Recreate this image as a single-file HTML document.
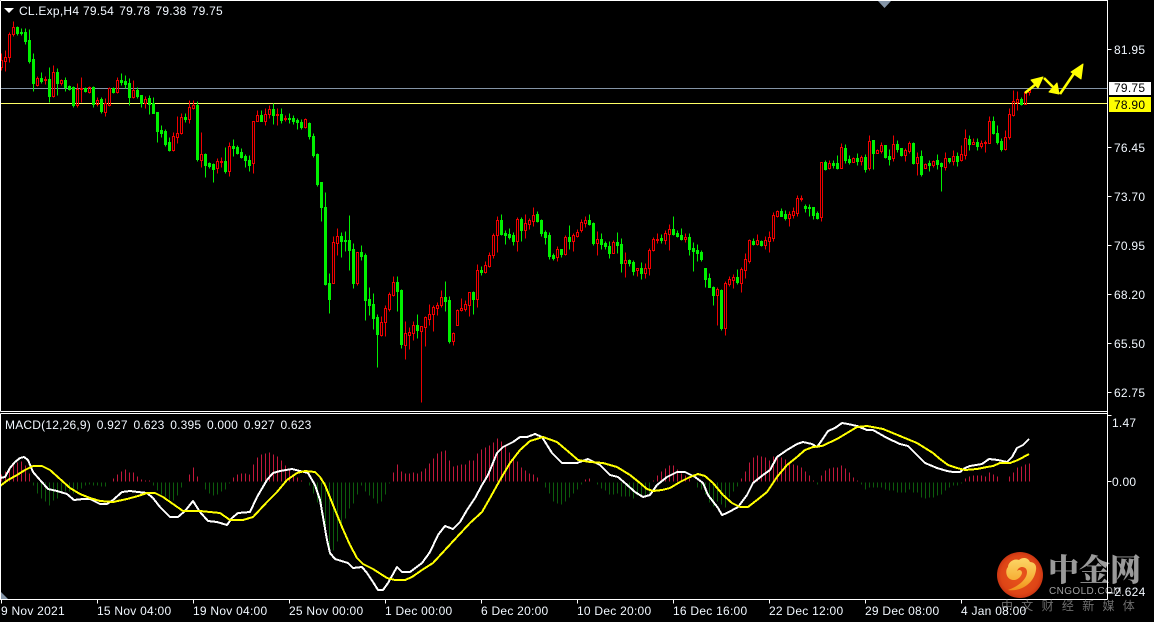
<!DOCTYPE html>
<html><head><meta charset="utf-8"><title>CL.Exp,H4</title>
<style>
html,body{margin:0;padding:0;background:#000;width:1154px;height:622px;overflow:hidden}
svg{display:block}
text{font-family:"Liberation Sans","Noto Sans CJK SC",sans-serif;font-size:12px;fill:#f2f8ff}
.t{letter-spacing:.25px}
</style></head><body>
<svg width="1154" height="622" viewBox="0 0 1154 622" xmlns="http://www.w3.org/2000/svg">
<defs>
<radialGradient id="o" cx=".5" cy=".5" r=".55"><stop offset="0" stop-color="#e9551c"/><stop offset=".75" stop-color="#de4516"/><stop offset="1" stop-color="#c02d10"/></radialGradient>
<linearGradient id="g" x1="0" y1="0" x2="0" y2="1"><stop offset="0" stop-color="#fcd667"/><stop offset=".7" stop-color="#f6ad33"/><stop offset="1" stop-color="#ef8f1c"/></linearGradient>
</defs>
<rect width="1154" height="622" fill="#000"/>
<g transform="translate(.5 .5)" shape-rendering="crispEdges" fill="none">
<path d="M0 88H1107" stroke="#8494a6"/>
<path d="M0 103H1107" stroke="#ffff66"/>
<path stroke="#00f000" fill="#00f000" d="M17 26V35M16 27h2v6h-2zM21 28V35M20 32h2v1h-2zM25 28V44M24 32h2v9h-2zM29 29V63M28 40h2v21h-2zM33 53V91M32 59h2v24h-2zM41 72V83M40 78h2v3h-2zM49 67V102M48 79h2v17h-2zM57 68V95M56 72h2v11h-2zM65 77V91M64 80h2v7h-2zM69 85V90M68 86h2v3h-2zM73 86V107M72 87h2v18h-2zM85 87V92M84 88h2v3h-2zM93 86V107M92 87h2v17h-2zM101 97V113M100 99h2v12h-2zM113 87V93M112 88h2v4h-2zM121 73V85M120 80h2v2h-2zM125 75V88M124 81h2v3h-2zM129 78V105M128 83h2v14h-2zM137 87V98M136 90h2v6h-2zM141 95V107M140 95h2v8h-2zM149 95V114M148 98h2v6h-2zM153 97V113M152 103h2v10h-2zM157 112V142M156 112h2v19h-2zM161 125V137M160 130h2v3h-2zM165 129V146M164 131h2v13h-2zM169 137V151M168 142h2v8h-2zM185 113V122M184 117h2v2h-2zM197 101V161M196 105h2v54h-2zM205 153V177M204 154h2v11h-2zM209 162V168M208 163h2v3h-2zM213 163V182M212 164h2v5h-2zM225 147V173M224 161h2v10h-2zM233 139V156M232 146h2v2h-2zM237 145V154M236 147h2v6h-2zM241 148V158M240 152h2v5h-2zM245 154V167M244 156h2v4h-2zM249 155V171M248 160h2v5h-2zM261 110V121M260 115h2v6h-2zM273 103V124M272 109h2v6h-2zM281 108V123M280 114h2v6h-2zM289 113V123M288 118h2v1h-2zM293 115V124M292 118h2v3h-2zM297 118V129M296 120h2v2h-2zM301 119V129M300 122h2v5h-2zM309 122V139M308 123h2v13h-2zM313 133V157M312 136h2v19h-2zM317 153V186M316 154h2v30h-2zM321 182V221M320 182h2v25h-2zM325 192V285M324 207h2v77h-2zM329 273V313M328 283h2v16h-2zM341 232V257M340 236h2v5h-2zM345 231V251M344 240h2v1h-2zM349 215V270M348 240h2v10h-2zM353 243V288M352 249h2v34h-2zM361 245V260M360 252h2v4h-2zM365 253V320M364 255h2v45h-2zM369 287V315M368 299h2v6h-2zM373 293V329M372 304h2v14h-2zM377 314V367M376 317h2v17h-2zM397 276V311M396 282h2v9h-2zM401 289V348M400 290h2v54h-2zM417 314V338M416 325h2v5h-2zM445 281V311M444 297h2v4h-2zM449 296V343M448 300h2v41h-2zM473 291V314M472 292h2v7h-2zM481 266V275M480 270h2v2h-2zM501 214V235M500 220h2v14h-2zM505 230V244M504 233h2v2h-2zM509 228V239M508 234h2v3h-2zM513 232V245M512 235h2v6h-2zM521 217V241M520 219h2v11h-2zM537 211V222M536 214h2v7h-2zM541 219V236M540 220h2v13h-2zM545 230V244M544 232h2v5h-2zM549 232V259M548 235h2v21h-2zM553 253V260M552 255h2v3h-2zM561 249V257M560 249h2v5h-2zM569 225V249M568 237h2v4h-2zM589 214V225M588 220h2v4h-2zM593 222V245M592 223h2v20h-2zM601 233V249M600 239h2v5h-2zM605 241V249M604 243h2v3h-2zM609 241V258M608 246h2v7h-2zM617 232V253M616 242h2v3h-2zM621 238V272M620 244h2v19h-2zM629 259V266M628 260h2v3h-2zM633 260V275M632 262h2v9h-2zM641 262V279M640 268h2v5h-2zM661 234V243M660 238h2v2h-2zM673 216V235M672 229h2v5h-2zM677 230V237M676 233h2v3h-2zM681 228V240M680 235h2v4h-2zM689 233V255M688 237h2v12h-2zM693 242V271M692 248h2v3h-2zM697 244V261M696 250h2v3h-2zM701 250V261M700 252h2v7h-2zM705 268V287M704 268h2v11h-2zM709 273V287M708 278h2v9h-2zM713 286V305M712 287h2v8h-2zM721 289V330M720 290h2v38h-2zM737 269V284M736 277h2v5h-2zM753 238V245M752 241h2v3h-2zM761 240V246M760 241h2v4h-2zM781 208V216M780 211h2v5h-2zM785 210V220M784 214h2v4h-2zM805 204V212M804 206h2v2h-2zM809 204V216M808 207h2v1h-2zM813 207V219M812 207h2v8h-2zM817 211V219M816 213h2v5h-2zM825 160V170M824 162h2v7h-2zM833 160V168M832 163h2v2h-2zM837 155V169M836 163h2v5h-2zM845 144V163M844 148h2v12h-2zM849 155V164M848 159h2v3h-2zM857 153V165M856 158h2v3h-2zM865 154V172M864 157h2v12h-2zM873 140V169M872 140h2v13h-2zM885 145V158M884 145h2v12h-2zM889 149V165M888 156h2v3h-2zM897 140V152M896 144h2v5h-2zM901 148V156M900 148h2v7h-2zM913 142V164M912 143h2v20h-2zM921 150V176M920 156h2v18h-2zM929 160V171M928 163h2v2h-2zM937 154V169M936 160h2v4h-2zM941 162V191M940 163h2v3h-2zM949 158V163M948 158h2v3h-2zM957 152V166M956 156h2v5h-2zM969 135V150M968 139h2v5h-2zM977 138V150M976 142h2v4h-2zM993 116V134M992 121h2v12h-2zM997 125V144M996 133h2v9h-2zM1001 138V151M1000 141h2v8h-2zM1021 97V105M1020 99h2v5h-2z"/>
<path stroke="#f00000" d="M1 53V60M1 67V70M0 60h2v7h-2zM5 50V57M5 61V71M4 57h2v4h-2zM9 32V34M9 57V62M8 34h2v23h-2zM13 21V27M13 34V36M12 27h2v7h-2zM37 76V78M37 85V86M36 78h2v7h-2zM45 76V79M45 80V84M44 79h2v1h-2zM53 65V72M53 96V97M52 72h2v24h-2zM61 79V80M61 83V85M60 80h2v3h-2zM77 83V89M77 105V107M76 89h2v16h-2zM81 77V88M81 89V102M80 88h2v1h-2zM89 86V87M89 92V93M88 87h2v5h-2zM97 97V100M97 104V106M96 100h2v4h-2zM105 98V103M105 112V116M104 103h2v9h-2zM109 87V88M109 105V106M108 88h2v17h-2zM117 77V80M117 92V93M116 80h2v12h-2zM133 80V90M133 97V98M132 90h2v7h-2zM145 96V99M145 103V108M144 99h2v4h-2zM173 132V136M173 150V151M172 136h2v14h-2zM177 116V133M177 137V143M176 133h2v4h-2zM181 113V117M181 133V134M180 117h2v16h-2zM189 100V107M189 119V123M188 107h2v12h-2zM193 100V105M193 108V109M192 105h2v3h-2zM201 132V154M201 160V167M200 154h2v6h-2zM217 158V161M217 168V173M216 161h2v7h-2zM221 157V161M221 162V167M220 161h2v1h-2zM229 142V146M229 171V176M228 146h2v25h-2zM253 121V121M253 163V173M252 121h2v42h-2zM257 110V115M257 121V121M256 115h2v6h-2zM265 108V114M265 121V125M264 114h2v7h-2zM269 105V109M269 114V118M268 109h2v5h-2zM277 108V114M277 115V125M276 114h2v1h-2zM285 115V118M285 119V121M284 118h2v1h-2zM305 118V119M305 127V128M304 119h2v8h-2zM333 236V242M333 283V283M332 242h2v41h-2zM337 228V236M337 243V255M336 236h2v7h-2zM357 252V252M357 283V285M356 252h2v31h-2zM381 316V322M381 335V336M380 322h2v13h-2zM385 305V308M385 322V336M384 308h2v14h-2zM389 292V294M389 309V311M388 294h2v15h-2zM393 276V282M393 295V296M392 282h2v13h-2zM405 321V333M405 345V359M404 333h2v12h-2zM409 327V332M409 335V349M408 332h2v3h-2zM413 321V325M413 333V340M412 325h2v8h-2zM421 326V326M421 331V402M420 326h2v5h-2zM425 316V317M425 327V346M424 317h2v10h-2zM429 304V314M429 319V325M428 314h2v5h-2zM433 305V307M433 314V331M432 307h2v7h-2zM437 302V305M437 308V315M436 305h2v3h-2zM441 290V297M441 305V307M440 297h2v8h-2zM453 332V333M453 341V345M452 333h2v8h-2zM457 309V310M457 325V325M456 310h2v15h-2zM461 298V308M461 310V311M460 308h2v2h-2zM465 300V304M465 309V311M464 304h2v5h-2zM469 292V292M469 305V316M468 292h2v13h-2zM477 264V270M477 299V307M476 270h2v29h-2zM485 261V265M485 272V273M484 265h2v7h-2zM489 252V255M489 266V267M488 255h2v11h-2zM493 233V235M493 255V258M492 235h2v20h-2zM497 216V220M497 235V252M496 220h2v15h-2zM517 217V219M517 241V251M516 219h2v22h-2zM525 214V223M525 230V238M524 223h2v7h-2zM529 218V220M529 224V229M528 220h2v4h-2zM533 207V215M533 221V226M532 215h2v6h-2zM557 246V249M557 257V261M556 249h2v8h-2zM565 235V237M565 254V255M564 237h2v17h-2zM573 233V235M573 241V251M572 235h2v6h-2zM577 229V232M577 236V237M576 232h2v4h-2zM581 219V222M581 230V232M580 222h2v8h-2zM585 216V220M585 223V227M584 220h2v3h-2zM597 231V239M597 243V255M596 239h2v4h-2zM613 240V242M613 253V253M612 242h2v11h-2zM625 252V260M625 263V277M624 260h2v3h-2zM637 268V268M637 270V276M636 268h2v2h-2zM645 263V268M645 273V278M644 268h2v5h-2zM649 248V250M649 268V275M648 250h2v18h-2zM653 237V239M653 250V251M652 239h2v11h-2zM657 233V239M657 240V243M656 239h2v1h-2zM665 230V233M665 240V244M664 233h2v7h-2zM669 224V229M669 234V250M668 229h2v5h-2zM685 233V237M685 239V242M684 237h2v2h-2zM717 287V289M717 295V325M716 289h2v6h-2zM725 281V283M725 328V335M724 283h2v45h-2zM729 276V279M729 284V286M728 279h2v5h-2zM733 274V277M733 280V288M732 277h2v3h-2zM741 267V269M741 283V292M740 269h2v14h-2zM745 253V259M745 270V278M744 259h2v11h-2zM749 239V240M749 261V263M748 240h2v21h-2zM757 234V240M757 244V245M756 240h2v4h-2zM765 236V240M765 245V249M764 240h2v5h-2zM769 231V237M769 241V252M768 237h2v4h-2zM773 212V215M773 238V241M772 215h2v23h-2zM777 210V211M777 216V217M776 211h2v5h-2zM789 211V214M789 218V226M788 214h2v4h-2zM793 207V211M793 215V218M792 211h2v4h-2zM797 195V198M797 213V216M796 198h2v15h-2zM801 195V198M801 199V201M800 198h2v1h-2zM821 162V162M821 217V221M820 162h2v55h-2zM829 160V163M829 168V169M828 163h2v5h-2zM841 143V147M841 168V168M840 147h2v21h-2zM853 157V158M853 162V162M852 158h2v4h-2zM861 155V157M861 161V165M860 157h2v4h-2zM869 135V141M869 168V170M868 141h2v27h-2zM877 149V150M877 153V153M876 150h2v3h-2zM881 142V145M881 151V153M880 145h2v6h-2zM893 135V144M893 158V161M892 144h2v14h-2zM905 148V150M905 155V161M904 150h2v5h-2zM909 141V143M909 151V153M908 143h2v8h-2zM917 152V157M917 163V175M916 157h2v6h-2zM925 163V164M925 168V168M924 164h2v4h-2zM933 160V161M933 165V167M932 161h2v4h-2zM945 152V158M945 167V170M944 158h2v9h-2zM953 150V156M953 161V165M952 156h2v5h-2zM961 145V154M961 160V161M960 154h2v6h-2zM965 129V138M965 155V159M964 138h2v17h-2zM973 138V142M973 144V144M972 142h2v2h-2zM981 140V143M981 146V148M980 143h2v3h-2zM985 140V142M985 143V152M984 142h2v1h-2zM989 116V121M989 143V143M988 121h2v22h-2zM1005 130V137M1005 149V150M1004 137h2v12h-2zM1009 108V114M1009 137V139M1008 114h2v23h-2zM1013 90V101M1013 115V116M1012 101h2v14h-2zM1017 91V99M1017 102V110M1016 99h2v3h-2zM1025 91V92M1025 104V104M1024 92h2v12h-2zM1029 89V90M1029 92V95M1028 90h2v2h-2z"/>
<path stroke="#c2183c" d="M1 481v-7M5 481v-10M9 481v-12M13 481v-17M17 481v-19M21 481v-20M25 481v-16M29 481v-8M113 481v-3M117 481v-7M121 481v-10M125 481v-12M129 481v-9M133 481v-9M137 481v-5M141 481v-2M145 481v-1M149 481v-1M189 481v-7M193 481v-14M197 481v-5M233 481v-4M237 481v-7M241 481v-8M245 481v-8M249 481v-7M253 481v-17M257 481v-24M261 481v-27M265 481v-28M269 481v-29M273 481v-27M277 481v-25M281 481v-21M285 481v-16M289 481v-12M293 481v-7M297 481v-4M301 481v-1M393 481v-9M397 481v-17M401 481v-10M405 481v-8M409 481v-8M413 481v-9M417 481v-8M421 481v-10M425 481v-13M429 481v-18M433 481v-23M437 481v-28M441 481v-30M445 481v-31M449 481v-21M453 481v-15M457 481v-16M461 481v-17M465 481v-17M469 481v-21M473 481v-21M477 481v-28M481 481v-32M485 481v-34M489 481v-36M493 481v-39M497 481v-43M501 481v-40M505 481v-36M509 481v-29M513 481v-24M517 481v-20M521 481v-14M525 481v-11M529 481v-8M533 481v-7M537 481v-4M585 481v-2M589 481v-3M653 481v-1M657 481v-6M661 481v-10M665 481v-13M669 481v-16M673 481v-16M677 481v-12M681 481v-8M685 481v-6M689 481v-3M741 481v-3M745 481v-10M749 481v-19M753 481v-24M757 481v-26M761 481v-25M765 481v-24M769 481v-21M773 481v-25M777 481v-24M781 481v-24M785 481v-22M789 481v-18M793 481v-17M797 481v-16M801 481v-14M805 481v-10M809 481v-6M813 481v-1M821 481v-6M825 481v-11M829 481v-13M833 481v-14M837 481v-14M841 481v-16M845 481v-13M849 481v-9M853 481v-4M857 481v-1M965 481v-3M969 481v-5M973 481v-6M977 481v-6M981 481v-6M985 481v-5M989 481v-9M993 481v-7M997 481v-5M1009 481v-5M1013 481v-9M1017 481v-14M1021 481v-15M1025 481v-17M1029 481v-18"/>
<path stroke="#0c5c0c" d="M33 482v3M37 482v11M41 482v16M45 482v19M49 482v23M53 482v18M57 482v16M61 482v11M65 482v9M69 482v9M73 482v11M77 482v7M81 482v6M85 482v3M89 482v2M93 482v3M97 482v3M101 482v4M105 482v4M153 482v3M157 482v8M161 482v12M165 482v14M169 482v17M173 482v18M177 482v13M181 482v5M205 482v7M209 482v11M213 482v13M217 482v12M221 482v9M225 482v7M229 482v1M309 482v3M313 482v11M317 482v20M321 482v33M325 482v46M329 482v72M333 482v68M337 482v59M341 482v46M345 482v36M349 482v26M353 482v21M357 482v12M361 482v3M365 482v9M369 482v13M373 482v16M377 482v21M381 482v19M385 482v12M389 482v1M545 482v5M549 482v11M553 482v19M557 482v21M561 482v22M565 482v19M569 482v15M573 482v11M577 482v7M581 482v2M597 482v2M601 482v6M605 482v8M609 482v12M613 482v12M617 482v11M621 482v14M625 482v14M629 482v14M633 482v16M637 482v13M641 482v14M645 482v13M649 482v11M697 482v5M701 482v7M705 482v12M709 482v20M713 482v24M717 482v19M721 482v22M725 482v25M729 482v15M733 482v9M737 482v4M817 482v2M861 482v2M865 482v7M869 482v5M873 482v5M877 482v5M881 482v5M885 482v7M889 482v8M893 482v8M897 482v10M901 482v10M905 482v10M909 482v7M913 482v10M917 482v10M921 482v15M925 482v16M929 482v15M933 482v15M937 482v13M941 482v12M945 482v8M949 482v5M953 482v3M957 482v3M961 482v1"/>
</g>
<polyline shape-rendering="crispEdges" fill="none" stroke="#fff" stroke-width="2" stroke-linejoin="round" points="0,478 5,477 10,468 15,462 20,458 24,457 28,460 33,472 40,480 48,489 57,491 67,494 74,500 83,499 90,499 100,504 107,504 113,500 122,492 130,491 138,492 147,493 153,498 160,507 170,517 178,517 185,511 193,501 200,512 208,521 217,522 227,525 232,518 238,513 250,512 257,497 267,480 273,473 280,471 292,469 300,471 308,473 315,485 320,500 323,517 327,540 330,553 335,559 348,563 353,568 362,567 367,573 373,582 378,590 383,590 388,583 397,567 402,572 410,572 422,563 430,552 438,535 445,526 453,529 460,522 467,510 475,498 482,485 488,475 497,453 503,447 513,442 520,437 527,437 535,434 542,437 552,453 562,463 577,463 588,459 600,465 610,475 618,477 625,483 635,492 643,497 650,495 657,485 667,477 677,472 685,472 695,477 703,483 708,495 718,508 722,515 727,513 738,507 747,495 753,483 763,475 770,470 777,457 787,450 797,444 803,442 812,444 817,447 822,440 828,431 835,428 842,423 848,424 857,426 867,430 873,430 887,438 900,444 908,446 917,455 925,463 937,468 947,471 953,472 960,472 965,468 970,466 982,464 989,459 998,460 1007,462 1012,457 1017,448 1023,445 1029,439"/>
<polyline shape-rendering="crispEdges" fill="none" stroke="#ffff00" stroke-width="2" stroke-linejoin="round" points="0,486 8,480 17,475 25,470 33,466 42,466 50,470 60,479 70,488 80,494 90,498 100,501 113,502 127,499 138,496 147,493 155,493 163,497 173,504 183,511 200,511 210,512 220,513 230,520 243,520 253,517 267,502 277,492 287,480 297,473 305,471 315,472 320,477 325,485 333,505 342,527 350,545 357,558 363,564 373,569 387,578 395,580 405,580 412,577 422,570 433,563 445,550 457,537 470,523 482,512 490,498 500,480 510,463 520,450 530,441 543,437 557,442 570,453 578,460 590,462 603,463 617,467 630,475 640,483 647,489 653,491 662,490 670,488 680,482 690,477 698,474 705,476 713,483 723,495 732,503 740,507 748,507 757,500 767,492 777,477 787,465 797,457 805,450 813,447 822,446 837,439 847,433 857,427 867,426 883,429 900,436 917,443 933,453 940,459 948,465 957,468 965,470 977,469 987,467 993,466 1000,463 1010,463 1018,460 1029,454"/>
<g fill="#ffff00" stroke="#ffff00" stroke-linejoin="round">
<path stroke-width="2.6" fill="none" d="M1025 93L1036 84M1044 78L1053 87M1060 94L1075 72"/>
<path stroke-width="1" d="M1043 77L1031 80L1038 88ZM1059 94L1049 92L1057 83ZM1083 64L1071 72L1081 79Z"/>
</g>
<!-- watermark -->
<circle cx="1020" cy="575" r="23" fill="url(#o)"/>
<path fill="url(#g)" d="M1008 590C1020 592 1034 584 1036 570C1037 564 1033 562 1030 562C1028 557 1022 557 1019 560C1013 558 1008 563 1008 567C1005 570 1006 577 1010 579C1015 582 1021 578 1022 573C1022 570 1019 569 1017 571C1019 565 1027 566 1027 572C1027 580 1017 587 1008 590Z"/>
<text x="1048" y="581" style="font-family:'Noto Serif CJK SC','Liberation Serif',serif;font-size:31px;font-weight:900;fill:#9a9a9a">中金网</text>
<text x="1049" y="594" style="font-size:10px;letter-spacing:.4px;fill:#a0a0a0">CNGOLD.COM</text>
<!-- frame -->
<g transform="translate(.5 .5)" shape-rendering="crispEdges" fill="none" stroke="#fff">
<path d="M0 0H1107V599M0 0V411M0 411H1107M0 413H1107M0 413V599H1107"/>
<path d="M1107 49h4M1107 147h4M1107 196h4M1107 245h4M1107 294h4M1107 343h4M1107 392h4M1107 415h4M1107 481h4M1107 592h4M1 599v4M97 599v4M193 599v4M289 599v4M385 599v4M481 599v4M577 599v4M673 599v4M769 599v4M865 599v4M961 599v4"/>
</g>
<path d="M1 592L8 599H1Z" fill="#8494a6"/>
<path d="M878 1H891L884.5 8Z" fill="#8494a6"/>
<path d="M4 8H14L9 13Z" fill="#fff"/>
<text x="1001" y="610" style="font-size:12px;letter-spacing:8.3px;fill:#6e6e6e">中文财经新媒体</text>
<rect x="1109" y="82" width="42" height="13" fill="#fff"/>
<rect x="1109" y="97" width="42" height="15" fill="#ffff00"/>
<g class="t">
<text x="19" y="15">CL.Exp,H4</text>
<text x="83" y="15" style="letter-spacing:.2px;word-spacing:1.7px">79.54 79.78 79.38 79.75</text>
<text x="5" y="429" style="letter-spacing:.2px;word-spacing:2.2px">MACD(12,26,9) 0.927 0.623 0.395 0.000 0.927 0.623</text>
<text x="1114" y="54">81.95</text>
<text x="1114" y="92" style="fill:#000">79.75</text>
<text x="1114" y="109" style="fill:#000">78.90</text>
<text x="1114" y="152">76.45</text>
<text x="1114" y="201">73.70</text>
<text x="1114" y="250">70.95</text>
<text x="1114" y="299">68.20</text>
<text x="1114" y="348">65.50</text>
<text x="1114" y="397">62.75</text>
<text x="1112" y="427">1.47</text>
<text x="1112" y="486">0.00</text>
<text x="1110" y="596">-2.624</text>
<text x="1" y="615">9 Nov 2021</text>
<text x="97" y="615">15 Nov 04:00</text>
<text x="193" y="615">19 Nov 04:00</text>
<text x="289" y="615">25 Nov 00:00</text>
<text x="385" y="615">1 Dec 00:00</text>
<text x="481" y="615">6 Dec 20:00</text>
<text x="577" y="615">10 Dec 20:00</text>
<text x="673" y="615">16 Dec 16:00</text>
<text x="769" y="615">22 Dec 12:00</text>
<text x="865" y="615">29 Dec 08:00</text>
<text x="961" y="615">4 Jan 08:00</text>
</g>
</svg>
</body></html>
